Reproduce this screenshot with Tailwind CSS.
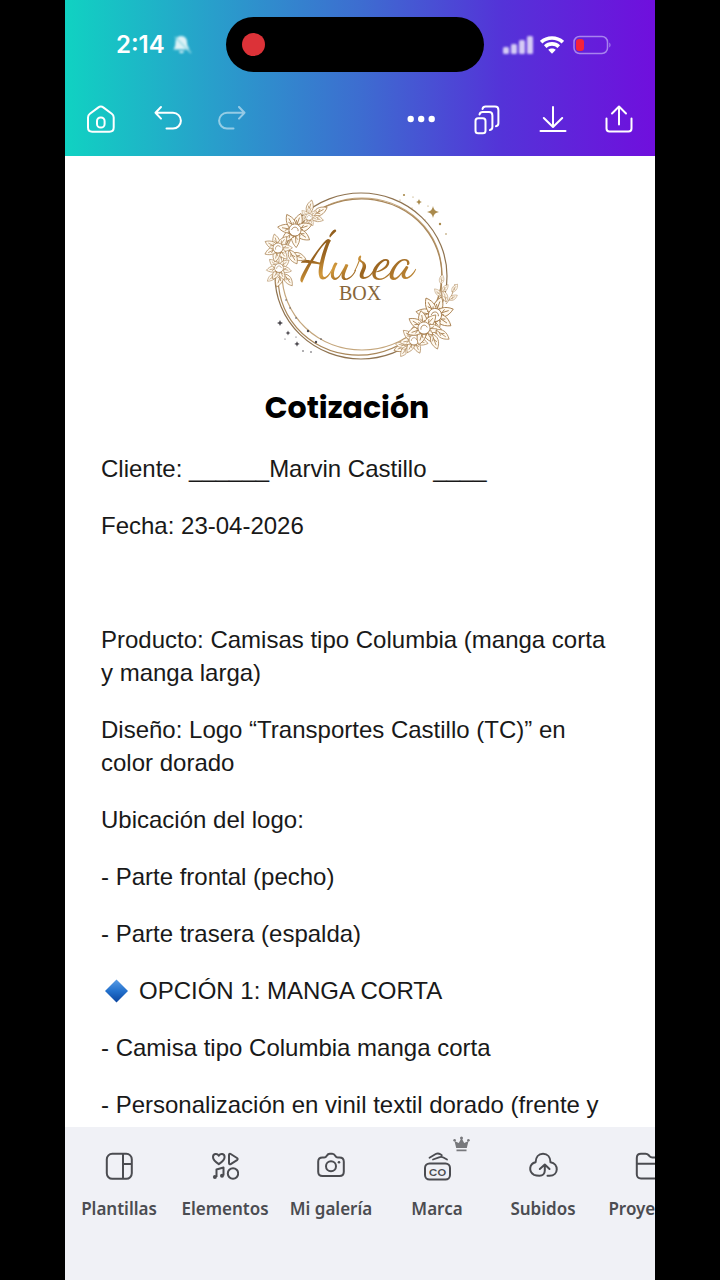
<!DOCTYPE html>
<html lang="es">
<head>
  <meta charset="UTF-8" />
  <meta name="viewport" content="width=device-width, initial-scale=1.0"/>
  <title>Cotización - Áurea Box</title>
  <script src="https://cdn.jsdelivr.net/npm/@tailwindcss/browser@4"></script>
</head>
<body class="bg-black">

  <div class="mx-auto flex h-screen w-full max-w-[590px] flex-col overflow-hidden bg-white">

    <header class="shrink-0 bg-[linear-gradient(90deg,#10d2c2,#289fcb_25%,#3d6dd0_50%,#5433d8_74%,#700fdd)] text-white">
      <!-- Status bar -->
      <div class="grid grid-cols-[161fr_258px_171fr] items-center pt-[17px]">
        <div class="flex items-center gap-[7px] pl-[51px] font-['Inter',sans-serif] text-2xl leading-7 font-semibold">
          <span>2:14</span>
          <svg class="size-5 blur-[1px]" viewBox="0 0 20 20" fill="currentColor" opacity=".85">
            <path d="M9 1c4 0 6 3 6 6 0 4 1.500 5 2.500 7.500H1.500C3 12 3.500 10 3.500 7c0-3 2-6 5.500-6zM7 16h5c-.5 3-4.500 3-5 0z"/>
            <path d="M3 2l16 16" stroke="#a6e2ea" stroke-width="1.500"/>
          </svg>
        </div>
        <div class="flex h-[55px] items-center rounded-full bg-black pl-4">
          <span class="size-[23px] rounded-full bg-[#dc3238]"></span>
        </div>
        <div class="flex items-center gap-[7px] pl-[18px]">
          <svg class="h-5 w-[31px] blur-[1px]" viewBox="0 0 31 20" fill="currentColor" opacity=".75">
            <rect x="1" y="12" width="6" height="7" rx="1.500"/>
            <rect x="9" y="9" width="6" height="10" rx="1.500"/>
            <rect x="17" y="5" width="6" height="14" rx="1.500"/>
            <rect x="25" y="1" width="6" height="18" rx="1.500"/>
          </svg>
          <svg class="h-[18px] w-6" viewBox="0 0 24 18" fill="none" stroke="currentColor" stroke-width="3.600">
            <path d="M1.200 6.200c6-5.600 15.600-5.600 21.600 0M5.200 10.600c3.800-3.600 9.800-3.600 13.600 0"/>
            <path d="M12 17.800l-3.800-4c2.200-1.900 5.400-1.900 7.600 0z" fill="currentColor" stroke="none"/>
          </svg>
          <svg class="h-5 w-10" viewBox="0 0 40 20" fill="none">
            <rect x="3" y="1.500" width="33.500" height="17" rx="5.500" stroke="#a783ee" stroke-width="1.500"/>
            <rect x="5" y="4" width="8" height="12" rx="3" fill="#f5223a"/>
            <path d="M38.300 7.500v5c1.600-.8 1.600-4.200 0-5z" fill="#a783ee"/>
          </svg>
        </div>
      </div>

      <!-- Editor toolbar -->
      <div class="flex justify-between px-[22px] pt-[33px] pb-[23px]">
        <div class="flex gap-[38px]">
          <button aria-label="Inicio">
            <svg class="size-7" viewBox="0 0 28 28" fill="none" stroke="currentColor" stroke-width="2">
              <path d="M1 12.500c0-1.600.6-2.700 1.900-3.700l8.200-6.200c1.700-1.300 3.800-1.300 5.500 0l8.200 6.200c1.300 1 1.900 2.100 1.900 3.700v10c0 2.700-1.500 4.200-4.200 4.200H5.200C2.500 26.700 1 25.200 1 22.500z"/>
              <rect x="10" y="12.500" width="7.600" height="10" rx="3.600"/>
            </svg>
          </button>
          <button aria-label="Deshacer">
            <svg class="size-7 overflow-visible" viewBox="0 0 28 28" fill="none" stroke="currentColor" stroke-width="2" stroke-linecap="round" stroke-linejoin="round">
              <path d="M8 2L2.500 7.800 8 13.600M2.500 7.800H20a7.900 7.900 0 010 15.800h-6.500"/>
            </svg>
          </button>
          <button aria-label="Rehacer" class="opacity-50">
            <svg class="size-7 overflow-visible" viewBox="0 0 28 28" fill="none" stroke="currentColor" stroke-width="2" stroke-linecap="round" stroke-linejoin="round">
              <path d="M20 2l5.500 5.800-5.500 5.800M25.500 7.800H8a7.900 7.900 0 000 15.800h6.500"/>
            </svg>
          </button>
        </div>
        <div class="flex gap-[38px]">
          <button aria-label="Más opciones">
            <svg class="size-7" viewBox="0 0 28 28" fill="currentColor">
              <circle cx="3.700" cy="14" r="3.200"/><circle cx="14.200" cy="14" r="3.200"/><circle cx="24.700" cy="14" r="3.200"/>
            </svg>
          </button>
          <button aria-label="Páginas">
            <svg class="size-7 overflow-visible" viewBox="0 0 28 28" fill="none" stroke="currentColor" stroke-width="2" stroke-linecap="round">
              <rect x="2.500" y="13.300" width="10" height="15" rx="2.600"/>
              <path d="M6.500 9.600c.4-1.700 1.500-2.500 3-2.500H16c2.200 0 3.400 1.200 3.400 3.400V22c0 1.500-.8 2.700-2.500 3M9.500 4c.4-1.700 1.500-2.500 3-2.500H22c2.200 0 3.400 1.200 3.400 3.400v13.300c0 1.500-.8 2.700-2.500 3"/>
            </svg>
          </button>
          <button aria-label="Descargar">
            <svg class="size-7" viewBox="0 0 28 28" fill="none" stroke="currentColor" stroke-width="2" stroke-linecap="round" stroke-linejoin="round">
              <path d="M14 2v19.500M4.800 13l9.200 9 9.200-9M1.500 26h25"/>
            </svg>
          </button>
          <button aria-label="Compartir">
            <svg class="size-7" viewBox="0 0 28 28" fill="none" stroke="currentColor" stroke-width="2" stroke-linecap="round" stroke-linejoin="round">
              <path d="M14 19.500V2M7 8.500L14 1.500l7 7M1.500 13.500v10c0 2 1 3 3 3h19c2 0 3-1 3-3v-10"/>
            </svg>
          </button>
        </div>
      </div>
    </header>

    <!-- Document -->
    <main class="min-h-0 flex-1 overflow-hidden px-9 pt-8 font-['Liberation_Sans',Arial,sans-serif] text-2xl leading-[33px] text-[#191919]">
      <svg class="mx-auto h-44 w-[200px]" viewBox="-2 0 200 176" fill="none" role="img" aria-label="Áurea Box">
        <defs>
          <linearGradient id="gold" x1="0" y1="0" x2="1" y2="1">
            <stop offset="0" stop-color="#8a5a1c"/>
            <stop offset=".3" stop-color="#9a6420"/>
            <stop offset=".45" stop-color="#d39a3c"/>
            <stop offset=".6" stop-color="#9a6420"/>
            <stop offset="1" stop-color="#cf9840"/>
          </linearGradient>
          <g id="leaf">
            <path d="M0 0C-5-4-5-10 0-16 5-10 5-4 0 0z" fill="#fffaf1"/>
            <path d="M0 0v-12M0-4l2-3M0-6l-2-3"/>
          </g>
          <g id="flower">
            <use href="#leaf"/>
            <use href="#leaf" transform="rotate(52)"/>
            <use href="#leaf" transform="rotate(104)"/>
            <use href="#leaf" transform="rotate(156)"/>
            <use href="#leaf" transform="rotate(208)"/>
            <use href="#leaf" transform="rotate(260)"/>
            <use href="#leaf" transform="rotate(312)"/>
            <circle r="5.500" fill="#fff"/>
            <path d="M-3 1c0-4 5-5 6-1M-5 3c2 3 6 4 9 1"/>
          </g>
          <path id="star" d="M0-6Q.7-.7 6 0 .7.7 0 6-.7.7-6 0-.7-.7 0-6z"/>
        </defs>

        <!-- Rings -->
        <g stroke="#a9875a" stroke-width="1.200">
          <ellipse cx="99" cy="88" rx="86" ry="83" stroke="#8f7350"/>
          <ellipse cx="100" cy="86" rx="80" ry="76" stroke="#c4a67c"/>
          <ellipse cx="98" cy="89" rx="82" ry="78" transform="rotate(-12 98 89)"/>
        </g>

        <!-- Top left bouquet -->
        <g stroke="#a47a48" stroke-width=".7">
          <use href="#leaf" transform="translate(51 27) rotate(62)"/>
          <use href="#leaf" transform="translate(46 26) rotate(15) scale(.9)"/>
          <use href="#leaf" transform="translate(49 29) rotate(105) scale(.8)"/>
          <use href="#flower" transform="translate(47 29) scale(.6)"/>
          <use href="#leaf" transform="translate(20 84) rotate(200)"/>
          <use href="#leaf" transform="translate(14 86) rotate(230) scale(.7)"/>
          <use href="#leaf" transform="translate(22 86) rotate(145) scale(.9)"/>
          <use href="#flower" transform="translate(17 80) scale(.8)"/>
          <use href="#leaf" transform="translate(29 66) rotate(110)"/>
          <use href="#leaf" transform="translate(27 62) rotate(150)"/>
          <use href="#flower" transform="translate(33 42) rotate(20) scale(1.100)"/>
          <use href="#flower" transform="translate(16 60) rotate(-15) scale(.9)"/>
        </g>

        <!-- Bottom right bouquet -->
        <g stroke="#a47a48" stroke-width=".7">
          <path d="M178 118c2-10 2-20 1-30M184 116c5-6 8-13 9-20"/>
          <use href="#leaf" transform="translate(179 96) rotate(8) scale(.6)"/>
          <use href="#leaf" transform="translate(180 104) rotate(40) scale(.6)"/>
          <use href="#leaf" transform="translate(179 108) rotate(-42) scale(.6)"/>
          <use href="#leaf" transform="translate(190 104) rotate(35) scale(.6)"/>
          <use href="#leaf" transform="translate(187 112) rotate(60) scale(.6)"/>
          <use href="#leaf" transform="translate(184 114) rotate(-10) scale(.7)"/>
          <use href="#leaf" transform="translate(147 157) rotate(-110)"/>
          <use href="#leaf" transform="translate(146 158) rotate(-80) scale(.8)"/>
          <use href="#leaf" transform="translate(146 158) rotate(-145) scale(.8)"/>
          <use href="#flower" transform="translate(152 152) scale(.9)"/>
          <use href="#flower" transform="translate(173 127) rotate(20) scale(1.200)"/>
          <use href="#flower" transform="translate(162 140) rotate(-10) scale(1.100)"/>
          <use href="#leaf" transform="translate(170 146) rotate(160)"/>
          <use href="#leaf" transform="translate(174 142) rotate(125)"/>
        </g>

        <!-- Sparkles -->
        <g fill="#a98a4c">
          <use href="#star" transform="translate(171 24)"/>
          <use href="#star" transform="translate(157 14) scale(.55)"/>
          <circle cx="142" cy="7" r="1.100"/><circle cx="178" cy="36" r="1.200"/><circle cx="184" cy="46" r=".8"/>
          <circle cx="138" cy="12" r=".6"/><circle cx="150" cy="20" r=".6"/><circle cx="163" cy="32" r=".6"/><circle cx="151" cy="9" r=".6"/><circle cx="166" cy="18" r=".6"/>
        </g>
        <g fill="#4d4a50">
          <use href="#star" transform="translate(18 135) scale(.5)"/>
          <use href="#star" transform="translate(26 145) scale(.4)"/>
          <use href="#star" transform="translate(35 156) scale(.45)"/>
          <circle cx="24" cy="112" r=".7"/><circle cx="28" cy="120" r=".7"/><circle cx="34" cy="130" r=".8"/><circle cx="46" cy="143" r="1.200"/><circle cx="54" cy="154" r="1.200"/><circle cx="41" cy="163" r=".8"/><circle cx="49" cy="164" r=".8"/><circle cx="59" cy="151" r=".8"/><circle cx="34" cy="149" r=".6"/><circle cx="23" cy="151" r=".6"/>
        </g>

        <text x="96" y="90" text-anchor="middle" class="font-['Dancing_Script','Liberation_Serif',serif] text-[54px]" fill="url(#gold)">Áurea</text>
        <text x="98" y="112" text-anchor="middle" class="font-['Liberation_Serif',serif] text-[20px]" fill="#87663a">BOX</text>
      </svg>

      <h1 class="my-6 pr-[26px] text-center font-['Poppins','Inter',sans-serif] text-[30px] leading-10 font-bold text-black">Cotización</h1>

      <div class="flex flex-col gap-6">
        <p>Cliente: ______Marvin Castillo ____</p>
        <p>Fecha: 23-04-2026</p>
        <p>&nbsp;</p>
        <p>Producto: Camisas tipo Columbia (manga corta y manga larga)</p>
        <p>Diseño: Logo “Transportes Castillo (TC)” en color dorado</p>
        <p>Ubicación del logo:</p>
        <p>- Parte frontal (pecho)</p>
        <p>- Parte trasera (espalda)</p>
        <p class="flex items-center gap-[7px]">
          <svg class="h-6 w-[31px]" viewBox="0 0 31 24">
            <defs>
              <linearGradient id="gem" x1="0" y1="0" x2="0" y2="1">
                <stop offset="0" stop-color="#5a9ce4"/>
                <stop offset=".5" stop-color="#2371cd"/>
                <stop offset="1" stop-color="#0b459f"/>
              </linearGradient>
            </defs>
            <path d="M15.500.5L27 12 15.500 23.500 4 12z" fill="url(#gem)"/>
          </svg>
          OPCIÓN 1: MANGA CORTA
        </p>
        <p>- Camisa tipo Columbia manga corta</p>
        <p>- Personalización en vinil textil dorado (frente y</p>
      </div>
    </main>

    <!-- Bottom navigation -->
    <nav class="flex h-[153px] shrink-0 items-start overflow-hidden bg-[#f0f1f6] pt-[25px] pl-px font-['Noto_Sans',sans-serif] text-[17px] leading-5 font-semibold text-[#4b4c51]">
      <button class="flex w-[106px] shrink-0 flex-col items-center gap-[19px] whitespace-nowrap">
        <svg class="size-7" viewBox="0 0 28 28" fill="none" stroke="currentColor" stroke-width="2">
          <rect x="1.800" y="1.800" width="25" height="25" rx="5.500"/>
          <path d="M18 1.800v25M18 12h8.800"/>
        </svg>
        Plantillas
      </button>
      <button class="flex w-[106px] shrink-0 flex-col items-center gap-[19px] whitespace-nowrap">
        <svg class="size-7" viewBox="0 0 28 28" fill="none" stroke="currentColor" stroke-width="2" stroke-linejoin="round">
          <path d="M7.800 12.200C3.500 9.300 2 7.200 2 5c0-3.300 4-4.200 5.800-1.300C9.600.8 13.600 1.700 13.600 5c0 2.200-1.500 4.300-5.800 7.200z"/>
          <path d="M18 3c0-1 .8-1.500 1.700-1l6.300 4c.9.600.9 1.500 0 2.100l-6.300 4c-.9.500-1.700 0-1.700-1z"/>
          <path d="M5.500 25v-7.500l7-2V23.500"/>
          <circle cx="3.900" cy="25" r="2" fill="currentColor" stroke="none"/>
          <circle cx="11" cy="23.800" r="2" fill="currentColor" stroke="none"/>
          <circle cx="22" cy="21.500" r="5.200"/>
        </svg>
        Elementos
      </button>
      <button class="flex w-[106px] shrink-0 flex-col items-center gap-[19px] whitespace-nowrap">
        <svg class="size-7" viewBox="0 0 28 28" fill="none" stroke="currentColor" stroke-width="2" stroke-linejoin="round">
          <path d="M5.500 5.500h1.700c1.300 0 1.900-.6 2.600-1.800.8-1.400 1.500-2 3-2h2.400c1.500 0 2.200.6 3 2 .7 1.200 1.300 1.800 2.600 1.800h1.700c2.800 0 4.300 1.500 4.300 4.300v10c0 2.800-1.500 4.300-4.300 4.300h-17c-2.800 0-4.300-1.500-4.300-4.300v-10c0-2.800 1.500-4.300 4.300-4.300z"/>
          <circle cx="14" cy="14.300" r="5"/>
          <circle cx="22" cy="10.300" r="1.300" fill="currentColor" stroke="none"/>
        </svg>
        Mi galería
      </button>
      <button class="relative flex w-[106px] shrink-0 flex-col items-center gap-[19px] whitespace-nowrap">
        <svg class="absolute -top-4 left-[69px] h-4 w-[17px]" viewBox="0 0 17 16" fill="#77787c">
          <path d="M3.200 12L1.500 5l4.300 2L8.500 2l2.700 5 4.300-2-1.700 7zM3.500 13.500h10v1.700h-10z"/>
          <circle cx="1.600" cy="4.200" r="1.300"/><circle cx="8.500" cy="2" r="1.500"/><circle cx="15.400" cy="4.200" r="1.300"/>
        </svg>
        <svg class="size-7 overflow-visible" viewBox="0 0 28 28" fill="none" stroke="currentColor" stroke-width="2" stroke-linecap="round">
          <rect x="2" y="11.500" width="25" height="16" rx="4.500"/>
          <path d="M6.500 5.800l6.200-3.700c1.500-.9 3-.9 4.700.2l1.400 1M10 7.500l6-2.200c1.600-.6 3-.5 4.400.2l3.600 2" stroke-width="1.800"/>
          <text x="14.500" y="23.500" text-anchor="middle" class="font-['Poppins','Inter',sans-serif] text-[11px] font-semibold" fill="currentColor" stroke="none">CO</text>
        </svg>
        Marca
      </button>
      <button class="flex w-[106px] shrink-0 flex-col items-center gap-[19px] whitespace-nowrap">
        <svg class="size-7 overflow-visible" viewBox="0 0 28 28" fill="none" stroke="currentColor" stroke-width="2" stroke-linecap="round" stroke-linejoin="round">
          <path d="M10.500 23.700c-3 0-3.800-.2-5.400-.9-5.800-2.800-5-11.200 1.500-12.600C6.800 5.200 9.500 1.800 14 1.800s7.400 3.400 7.500 8.400c8.500 1.500 8.500 13.500-1 13.500h-2M10.800 17l5-4.500 4.700 4.500M15.800 13v5.500c0 3-2 5.200-5.300 5.200"/>
        </svg>
        Subidos
      </button>
      <button class="flex w-[106px] shrink-0 flex-col items-center gap-[19px] whitespace-nowrap">
        <svg class="size-7" viewBox="0 0 28 28" fill="none" stroke="currentColor" stroke-width="2" stroke-linejoin="round">
          <path d="M6 1.800h4.500c1.300 0 2.200.3 3 1.200l1.200 1.400c.7.800 1.500 1.100 2.700 1.100H23c2.800 0 4.200 1.400 4.200 4.200v12.500c0 2.800-1.400 4.300-4.200 4.300H6c-2.800 0-4.200-1.500-4.200-4.300V6C1.800 3.200 3.200 1.800 6 1.800zM1.800 11.800h25.400"/>
        </svg>
        Proyectos
      </button>
    </nav>

  </div>

</body>
</html>
